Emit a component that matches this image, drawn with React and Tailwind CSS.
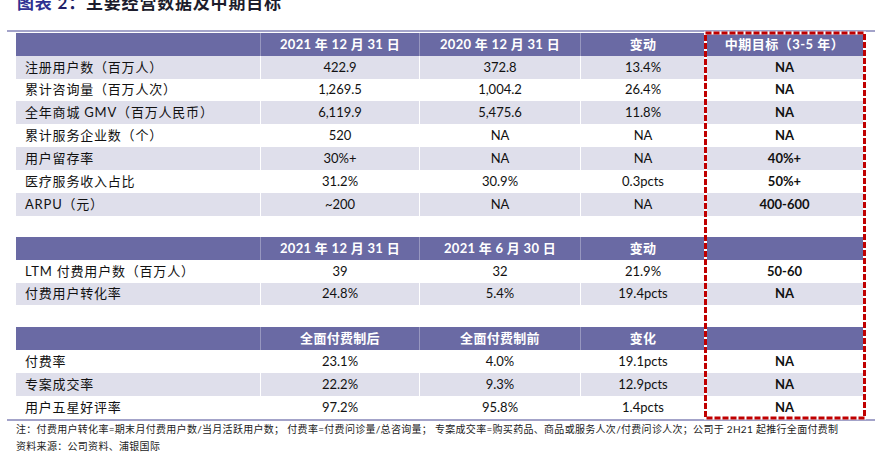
import React from "react";

const FONT = { fontFamily: 'Lato, "Noto Sans CJK SC", sans-serif' };

const GRID = "grid grid-cols-[244px_159px_161px_125px_158px]";

function Header({ cells }) {
  return (
    <div className={`${GRID} h-[23px] bg-[#6a6aa4] text-white font-bold text-[13px]`}>
      {cells.map((c, i) => (
        <div
          key={i}
          className={`flex items-center justify-center ${i > 0 ? "border-l border-white/30" : ""} ${i === 4 ? "tracking-[0.5px]" : "tracking-[0.3px]"}`}
        >
          {c}
        </div>
      ))}
    </div>
  );
}

function Row({ cells, shade, h = 23 }) {
  return (
    <div
      className={`${GRID} ${h === 22 ? "h-[22px]" : "h-[23px]"} ${shade ? "bg-[#dfdfeb]" : "bg-white"} text-[13px] text-[#111]`}
    >
      {cells.map((c, i) => (
        <div
          key={i}
          className={
            i === 0
              ? "flex items-center pl-[9px] tracking-[0.8px]"
              : `flex items-center justify-center border-l border-white ${i === 4 ? "font-bold" : ""}`
          }
        >
          {c}
        </div>
      ))}
    </div>
  );
}

export default function App() {
  return (
    <div className="relative w-[888px] h-[461px] bg-white overflow-hidden" style={FONT}>
      <div className="flex flex-col">
        <div className="-mt-[6px] h-[17px] leading-[17px] pl-[17px] text-[17px] font-bold tracking-[0.8px] whitespace-nowrap">
          <span className="text-[#2e3192]">图表</span>
          <span className="text-[#1f1f66]"> 2：</span>
          <span className="text-[#1c1c2c]">主要经营数据及中期目标</span>
        </div>

        <div className="mt-[19px] ml-[7px] w-[868px] h-[2px] bg-[#a3a3c9]" />

        <div className="ml-[16px] mt-[1px] w-[847px] flex flex-col">
          <Header cells={["", "2021 年 12 月 31 日", "2020 年 12 月 31 日", "变动", "中期目标（3-5 年）"]} />
          <Row shade cells={["注册用户数（百万人）", "422.9", "372.8", "13.4%", "NA"]} />
          <Row h={22} cells={["累计咨询量（百万人次）", "1,269.5", "1,004.2", "26.4%", "NA"]} />
          <Row shade cells={["全年商城 GMV（百万人民币）", "6,119.9", "5,475.6", "11.8%", "NA"]} />
          <Row cells={["累计服务企业数（个）", "520", "NA", "NA", "NA"]} />
          <Row shade cells={["用户留存率", "30%+", "NA", "NA", "40%+"]} />
          <Row cells={["医疗服务收入占比", "31.2%", "30.9%", "0.3pcts", "50%+"]} />
          <Row shade cells={["ARPU（元）", "~200", "NA", "NA", "400-600"]} />

          <div className="h-[21px]" />

          <Header cells={["", "2021 年 12 月 31 日", "2021 年 6 月 30 日", "变动", ""]} />
          <Row cells={["LTM 付费用户数（百万人）", "39", "32", "21.9%", "50-60"]} />
          <Row shade h={22} cells={["付费用户转化率", "24.8%", "5.4%", "19.4pcts", "NA"]} />

          <div className="h-[22px]" />

          <Header cells={["", "全面付费制后", "全面付费制前", "变化", ""]} />
          <Row cells={["付费率", "23.1%", "4.0%", "19.1pcts", "NA"]} />
          <Row shade cells={["专案成交率", "22.2%", "9.3%", "12.9pcts", "NA"]} />
          <Row cells={["用户五星好评率", "97.2%", "95.8%", "1.4pcts", "NA"]} />
        </div>

        <div className="ml-[7px] w-[868px] h-[2px] bg-[#a3a3c9]" />

        <div className="pl-[16px] text-[10px] leading-[17px] text-[#222] whitespace-nowrap tracking-[0.3px]">
          <div>注：付费用户转化率=期末月付费用户数/当月活跃用户数； 付费率=付费问诊量/总咨询量； 专案成交率=购买药品、商品或服务人次/付费问诊人次；公司于 2H21 起推行全面付费制</div>
          <div>资料来源：公司资料、浦银国际</div>
        </div>
      </div>

      <svg className="absolute left-0 top-0 pointer-events-none" width="888" height="461">
        <rect x="705.5" y="33" width="159" height="385" fill="none" stroke="#ffffff" strokeWidth="3" />
        <rect x="705.5" y="33" width="159" height="385" fill="none" stroke="#c00000" strokeWidth="3" strokeDasharray="6 2" />
      </svg>
    </div>
  );
}
